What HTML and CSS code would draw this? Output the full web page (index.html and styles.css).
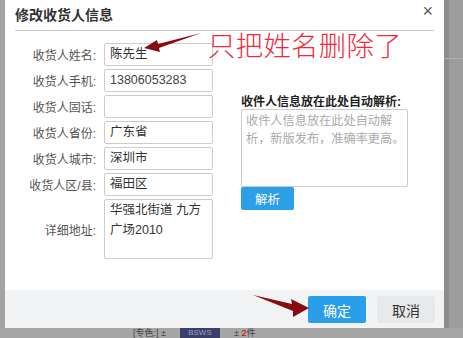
FILE: index.html
```html
<!DOCTYPE html>
<html lang="zh">
<head>
<meta charset="utf-8">
<link rel="stylesheet" href="styles.css">
</head>
<body>
<div class="page">
  <div class="top">
    <div class="side-left"></div>
    <div class="dialog">
      <div class="header">
        <span class="title">修改收货人信息</span>
        <span class="close">×</span>
      </div>
      <div class="content">
        <div class="form">
          <label class="lbl">收货人姓名:</label><div class="inp">陈先生</div>
          <label class="lbl">收货人手机:</label><div class="inp num">13806053283</div>
          <label class="lbl">收货人固话:</label><div class="inp"></div>
          <label class="lbl">收货人省份:</label><div class="inp">广东省</div>
          <label class="lbl">收货人城市:</label><div class="inp">深圳市</div>
          <label class="lbl">收货人区/县:</label><div class="inp">福田区</div>
          <label class="lbl">详细地址:</label><div class="inp area">华强北街道 九方<br>广场2010</div>
        </div>
        <div class="parse">
          <div class="parse-title">收件人信息放在此处自动解析:</div>
          <div class="parse-box">收件人信息放在此处自动解<br>析，新版发布，准确率更高。</div>
          <button class="btn-parse">解析</button>
        </div>
      </div>
      <div class="footer">
        <button class="btn ok">确定</button>
        <button class="btn cancel">取消</button>
      </div>
    </div>
    <div class="side-right"><div class="side-line"></div></div>
  </div>
  <div class="bottom">
    <span class="b-text">[专色:] ±</span>
    <span class="b-box">BSWS</span>
    <span class="b-text2">± <em>2</em>件</span>
  </div>
  <div class="note">只把姓名删除了</div>
  <svg class="arrows" width="463" height="338" viewBox="0 0 463 338">
    <path d="M201 33 L158 44 L157 40 L144 48 L160 52 L159 48 Z" fill="#8a0a12"/>
    <path d="M253 295 L292 304 L291 299 L309 308 L293 317 L293 311 Z" fill="#8a0a12"/>
  </svg>
</div>
</body>
</html>
```
FILE: styles.css
```css
html, body { margin: 0; padding: 0; }
body {
  font-family: "Liberation Sans", "Noto Sans CJK SC", sans-serif;
  font-size: 12px;
  color: #333;
}
.page {
  position: relative;
  width: 463px;
  height: 338px;
  overflow: hidden;
  background: #9b9b9b;
}
.top { display: flex; height: 328px; }
.side-left { width: 5px; background: #a3a3a3; }
.side-right {
  flex: 1;
  background: linear-gradient(to right, #8d8d8d 0 5px, #9d9d9d 5px);
  padding-top: 58px;
  box-sizing: border-box;
}
.side-line { height: 1px; background: #b0b0b0; }
.dialog {
  width: 439px;
  background: #fff;
  display: flex;
  flex-direction: column;
}
.header {
  margin: 0 10px;
  height: 30px;
  border-bottom: 1px solid #c8c8c8;
  display: flex;
  align-items: center;
  justify-content: space-between;
}
.title { font-size: 14px; font-weight: bold; color: #333; padding-bottom: 3px; }
.close { font-size: 18px; color: #555; margin-right: 1px; padding-bottom: 8px; }
.content {
  flex: 1;
  display: flex;
  padding-top: 12px;
}
.form {
  display: grid;
  grid-template-columns: 92px 109px;
  column-gap: 7px;
  row-gap: 3px;
  align-items: center;
  align-content: start;
}
.lbl {
  text-align: right;
  color: #555;
  font-size: 12px;
  white-space: nowrap;
  padding-right: 1px;
}
.inp {
  height: 23px;
  box-sizing: border-box;
  border: 1px solid #ccc;
  border-radius: 2px;
  padding: 0 5px;
  line-height: 21px;
  font-size: 12.5px;
  color: #333;
}
.inp.num { color: #444; }
.inp.area {
  height: 60px;
  line-height: 20px;
}
.parse {
  margin-left: 28px;
  margin-top: 51px;
  width: 167px;
}
.parse-title {
  font-weight: bold;
  font-size: 12px;
  color: #222;
  line-height: 16px;
  white-space: nowrap;
}
.parse-box {
  margin-top: -1px;
  height: 78px;
  box-sizing: border-box;
  border: 1px solid #ccc;
  border-radius: 2px;
  padding: 2px 3px 2px 4px;
  color: #aaa;
  font-size: 12.2px;
  line-height: 18px;
  white-space: nowrap;
  overflow: hidden;
}
.btn-parse {
  display: block;
  width: 53px;
  height: 23px;
  border: 0;
  border-radius: 2px;
  background: #2c9fe9;
  color: #fff;
  font-family: inherit;
  font-size: 12.5px;
  padding: 0;
}
.footer {
  height: 38px;
  background: #f1f3f4;
  display: flex;
  justify-content: flex-end;
  align-items: center;
  gap: 11px;
  padding-right: 9px;
  padding-top: 1px;
  box-sizing: border-box;
}
.btn {
  width: 58px;
  height: 27px;
  border: 0;
  border-radius: 2px;
  font-family: inherit;
  font-size: 14px;
  padding: 0;
}
.btn.ok { background: #2a9fe9; color: #fff; }
.btn.cancel { background: #e8e9ea; color: #333; }
.bottom {
  height: 10px;
  background: #a6a6a6;
  font-size: 9px;
  line-height: 10px;
  color: #444;
  display: flex;
  align-items: flex-start;
  overflow: hidden;
}
.b-text { margin-left: 133px; }
.b-box {
  margin-left: 14px;
  width: 40px;
  height: 10px;
  background: #3b3f68;
  color: #9aa0c8;
  font-size: 8px;
  line-height: 10px;
  text-align: center;
}
.b-text2 { margin-left: 14px; }
.b-text2 em { font-style: normal; color: #c00; }
.note {
  position: absolute;
  left: 208px;
  top: 27px;
  font-family: "Noto Sans CJK SC", sans-serif;
  font-size: 27.3px;
  line-height: 34px;
  color: #ef2a3c;
  font-weight: 300;
  letter-spacing: 0.4px;
}
.arrows { position: absolute; left: 0; top: 0; }
```
